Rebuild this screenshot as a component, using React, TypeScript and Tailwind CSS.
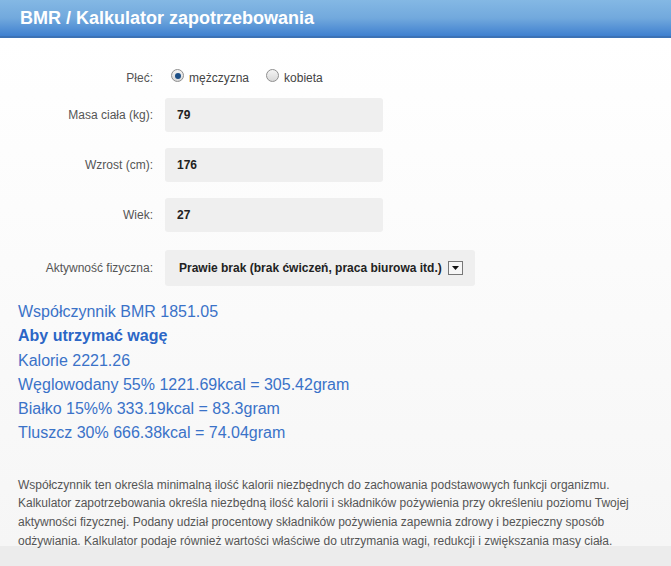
import { useState } from 'react';

const font = { fontFamily: '"Liberation Sans", Arial, sans-serif' };

function Row({ label, children, className = '' }: { label: string; children: React.ReactNode; className?: string }) {
  return (
    <div className={`flex items-center ${className}`}>
      <div className="w-[153px] shrink-0 text-right text-[12px] text-[#555]">{label}</div>
      <div className="ml-[12px]">{children}</div>
    </div>
  );
}

function Field({ value }: { value: string }) {
  return (
    <div className="flex h-[34px] w-[218px] items-center rounded-[3px] bg-[#efefef] px-[12px] text-[12px] font-bold text-[#222]">
      {value}
    </div>
  );
}

function Radio({ checked }: { checked: boolean }) {
  return (
    <span className="relative inline-block h-[13px] w-[13px] rounded-full border border-[#8f8f8f] bg-gradient-to-b from-[#f4f4f4] to-[#d8d8d8]">
      {checked && (
        <span className="absolute left-[2.5px] top-[2.5px] h-[6px] w-[6px] rounded-full bg-[#1d4f86]" />
      )}
    </span>
  );
}

export default function App() {
  const [sex] = useState('m');
  return (
    <div style={font} className="flex h-[566px] w-[671px] flex-col overflow-hidden bg-[#ececec]">
      <div className="flex h-[38px] items-center border-b-2 border-[#3c72b5] bg-gradient-to-b from-[#84b8e4] via-[#72a9dd] to-[#3f80cf] px-[20px]">
        <h1 className="text-[18px] font-bold text-white">BMR / Kalkulator zapotrzebowania</h1>
      </div>

      <div className="flex h-[508px] flex-col bg-gradient-to-b from-white to-[#f6f6f6]">
        <div className="flex flex-col pt-[28px]">
          <Row label="Płeć:" className="h-[24px]">
            <div className="flex items-center text-[12px] text-[#444]">
              <span className="ml-[6px]"><Radio checked={sex === 'm'} /></span>
              <span className="ml-[5px]">mężczyzna</span>
              <span className="ml-[17px]"><Radio checked={sex === 'k'} /></span>
              <span className="ml-[5px]">kobieta</span>
            </div>
          </Row>
          <Row label="Masa ciała (kg):" className="mt-[8px]">
            <Field value="79" />
          </Row>
          <Row label="Wzrost (cm):" className="mt-[16px]">
            <Field value="176" />
          </Row>
          <Row label="Wiek:" className="mt-[16px]">
            <Field value="27" />
          </Row>
          <Row label="Aktywność fizyczna:" className="mt-[18px]">
            <div className="flex h-[36px] w-[310px] items-center rounded-[3px] bg-[#efefef] pl-[14px] text-[12px] font-bold text-[#222]">
              Prawie brak (brak ćwiczeń, praca biurowa itd.)
              <span className="ml-[6px] flex h-[14px] w-[15px] items-center justify-center border border-[#777] bg-[#f6f6f6]">
                <svg width="7" height="4" viewBox="0 0 7 4"><path d="M0 0h7L3.5 4z" fill="#111" /></svg>
              </span>
            </div>
          </Row>
        </div>

        <div className="mt-[14px] flex flex-col px-[18px] text-[16px] leading-[24.3px] text-[#3a72c8]">
          <div>Współczynnik BMR 1851.05</div>
          <div className="font-bold text-[#2b66c6]">Aby utrzymać wagę</div>
          <div>Kalorie 2221.26</div>
          <div>Węglowodany 55% 1221.69kcal = 305.42gram</div>
          <div>Białko 15%% 333.19kcal = 83.3gram</div>
          <div>Tluszcz 30% 666.38kcal = 74.04gram</div>
        </div>

        <p className="mt-[30px] px-[18px] text-[12px] leading-[18.7px] text-[#555]">
          Współczynnik ten określa minimalną ilość kalorii niezbędnych do zachowania podstawowych funkcji organizmu. Kalkulator zapotrzebowania określa niezbędną ilość kalorii i składników pożywienia przy określeniu poziomu Twojej aktywności fizycznej. Podany udział procentowy składników pożywienia zapewnia zdrowy i bezpieczny sposób odżywiania. Kalkulator podaje również wartości właściwe do utrzymania wagi, redukcji i zwiększania masy ciała.
        </p>
      </div>
    </div>
  );
}
